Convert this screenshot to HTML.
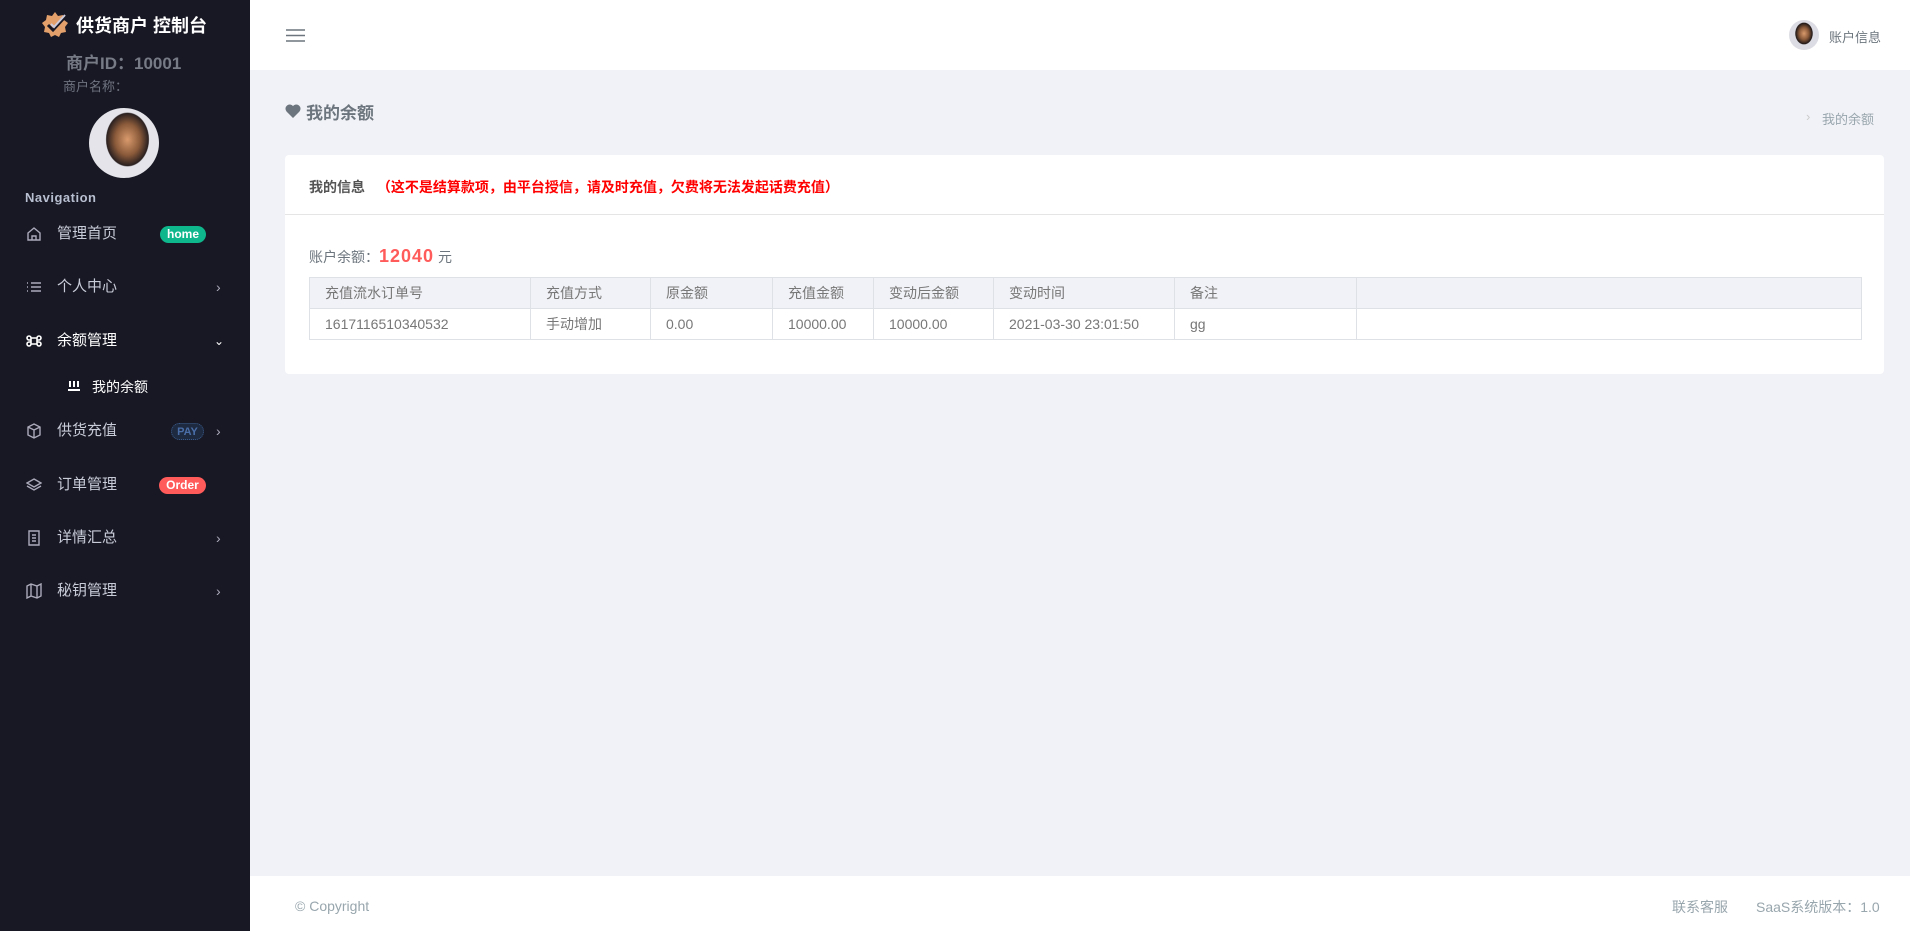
<!DOCTYPE html>
<html><head><meta charset="utf-8"><style>
*{margin:0;padding:0;box-sizing:border-box}
body{width:1910px;height:931px;overflow:hidden;background:#f1f2f7;font-family:"Liberation Sans","Noto Sans CJK SC",sans-serif;position:relative;color:#6c757d}
.side{position:absolute;left:0;top:0;width:250px;height:931px;background:#181824}
.abs{position:absolute}
.mi{position:absolute;left:0;width:250px;height:20px;color:#c8cbd8;font-size:15px;line-height:20px}
.mi .ic{position:absolute;left:26px;top:2px;width:16px;height:16px}
.mi .tx{position:absolute;left:57px;top:0}
.mi .chev{position:absolute;left:216px;top:0;font-size:14px;color:#aab}
.badge{position:absolute;height:17px;line-height:17px;border-radius:9px;font-size:12px;font-weight:bold;color:#fff;text-align:center;top:2px}
.top{position:absolute;left:250px;top:0;width:1660px;height:70px;background:#fff}
.card{position:absolute;left:285px;top:155px;width:1599px;height:219px;background:#fff;border-radius:4px}
table{position:absolute;left:24px;top:122px;width:1553px;border-collapse:collapse;font-size:14px;color:#777}
td{border:1px solid #dee2e6;height:31px;padding-left:15px;white-space:nowrap}
tr.h td{background:#f1f2f7;height:31px}
.foot{position:absolute;left:250px;top:876px;width:1660px;height:55px;background:#fff;font-size:14px;color:#98a6ad}
</style></head><body>
<div class="side">
 <svg class="abs" style="left:40px;top:10px" width="30" height="30" viewBox="0 0 30 30"><path d="M15 2l3 4 5-1 1 5 4 3-3 4 1 5-5 1-2 4-4-2-4 2-2-4-5-1 1-5-3-4 4-3 1-5 5 1z" fill="#e3a06b"/><path d="M8 15l5 5 12-13" stroke="#181824" stroke-width="3" fill="none"/><path d="M11 14l3 3 11-12" stroke="#ccd" stroke-width="2" fill="none"/></svg>
 <div class="abs" style="left:76px;top:12px;color:#fff;font-size:18px;font-weight:bold">供货商户 控制台</div>
 <div class="abs" style="left:66px;top:49px;color:#777b85;font-size:17px;font-weight:bold">商户ID：10001</div>
 <div class="abs" style="left:63px;top:76px;color:#6f7380;font-size:13px">商户名称：</div>
 <div class="abs" style="left:89px;top:108px;width:70px;height:70px;border-radius:50%;background:radial-gradient(ellipse 40% 50% at 55% 45%,#d99a6c 0,#8a5a3a 45%,#2a2020 75%,transparent 78%),#e4e4ea"></div>
 <div class="abs" style="left:25px;top:190px;color:#b8bfd0;font-size:13px;font-weight:bold;letter-spacing:.5px">Navigation</div>
 <div class="mi" style="top:224px"><svg class="ic" viewBox="0 0 16 16" fill="none" stroke="#aab" stroke-width="1.4"><path d="M2 7l6-5 6 5v7H2z M6 14v-4h4v4"/></svg><span class="tx">管理首页</span><span class="badge" style="left:160px;width:46px;background:#0fb78d">home</span></div>
 <div class="mi" style="top:277px"><svg class="ic" viewBox="0 0 16 16" stroke="#aab" stroke-width="1.4"><path d="M1 4h1M5 4h10M1 8h1M5 8h10M1 12h1M5 12h10"/></svg><span class="tx">个人中心</span><span class="chev">›</span></div>
 <div class="mi" style="top:331px;color:#fff"><svg class="ic" viewBox="0 0 16 16" fill="none" stroke="#fff" stroke-width="1.6"><path d="M5 5h6v6H5zM5 5a2 2 0 1 0-2 2h2M11 5a2 2 0 1 1 2 2h-2M5 11a2 2 0 1 1-2-2h2M11 11a2 2 0 1 0 2-2h-2"/></svg><span class="tx">余额管理</span><span class="chev" style="color:#fff;font-size:12px;left:214px">⌄</span></div>
 <div class="mi" style="top:377px;color:#fff;font-size:14px"><svg class="abs" style="left:68px;top:4px" width="12" height="11" viewBox="0 0 12 11" fill="#fff"><rect x="1" y="0" width="2" height="6"/><rect x="5" y="0" width="2" height="6"/><rect x="9" y="0" width="2" height="6"/><rect x="0" y="8" width="12" height="2"/></svg><span class="tx" style="left:92px">我的余额</span></div>
 <div class="mi" style="top:421px"><svg class="ic" viewBox="0 0 16 16" fill="none" stroke="#aab" stroke-width="1.4"><path d="M8 1l6 3v8l-6 3-6-3V4zM2 4l6 3 6-3M8 7v8"/></svg><span class="tx">供货充值</span><span class="badge" style="left:171px;width:33px;color:#4a6ea8;border:1px dotted #3a5a8a;background:#1e2a40;font-size:11px">PAY</span><span class="chev">›</span></div>
 <div class="mi" style="top:475px"><svg class="ic" viewBox="0 0 16 16" fill="none" stroke="#aab" stroke-width="1.4"><path d="M8 2l7 4-7 4-7-4zM1 9l7 4 7-4"/></svg><span class="tx">订单管理</span><span class="badge" style="left:159px;width:47px;background:#ff5b5b">Order</span></div>
 <div class="mi" style="top:528px"><svg class="ic" viewBox="0 0 16 16" fill="none" stroke="#aab" stroke-width="1.4"><path d="M3 1h10v14H3zM6 5h4M6 8h4M6 11h4"/></svg><span class="tx">详情汇总</span><span class="chev">›</span></div>
 <div class="mi" style="top:581px"><svg class="ic" viewBox="0 0 16 16" fill="none" stroke="#aab" stroke-width="1.4"><path d="M1 3l4-2 6 2 4-2v12l-4 2-6-2-4 2zM5 1v12M11 3v12"/></svg><span class="tx">秘钥管理</span><span class="chev">›</span></div>
</div>
<div class="top">
 <svg class="abs" style="left:36px;top:29px" width="19" height="13" viewBox="0 0 19 13" stroke="#6c757d" stroke-width="1.6"><path d="M0 1h19M0 6.5h19M0 12h19"/></svg>
 <div class="abs" style="left:1539px;top:20px;width:30px;height:30px;border-radius:50%;background:radial-gradient(ellipse 40% 50% at 50% 45%,#d99a6c 0,#8a5a3a 40%,#201818 70%,transparent 75%),#dcdce4"></div>
 <div class="abs" style="left:1579px;top:27px;font-size:13px;color:#6c757d">账户信息</div>
</div>
<svg class="abs" style="left:285px;top:103px" width="16" height="15" viewBox="0 0 16 15"><path d="M8 15L1.5 8.5A4 4 0 0 1 8 3a4 4 0 0 1 6.5 5.5z" fill="#6c757d"/></svg>
<div class="abs" style="left:306px;top:99px;font-size:17px;font-weight:bold;color:#6c757d">我的余额</div>
<div class="abs" style="left:1806px;top:109px;font-size:13px;color:#ccc">›</div>
<div class="abs" style="left:1822px;top:109px;font-size:13px;color:#98a6ad">我的余额</div>
<div class="card">
 <div class="abs" style="left:24px;top:22px;font-size:14px;font-weight:bold;color:#555"> 我的信息 <span style="color:#f00;margin-left:8px">（这不是结算款项，由平台授信，请及时充值，欠费将无法发起话费充值）</span></div>
 <div class="abs" style="left:0;top:59px;width:1599px;border-top:1px solid #e5e5e5"></div>
 <div class="abs" style="left:24px;top:91px;font-size:14px;color:#6c757d">账户余额：<b style="color:#ff5b5b;font-size:18px;letter-spacing:1px">12040</b> 元</div>
 <table>
  <tr class="h"><td style="width:221px">充值流水订单号</td><td style="width:120px">充值方式</td><td style="width:122px">原金额</td><td style="width:101px">充值金额</td><td style="width:120px">变动后金额</td><td style="width:181px">变动时间</td><td style="width:182px">备注</td><td></td></tr>
  <tr><td>1617116510340532</td><td>手动增加</td><td>0.00</td><td>10000.00</td><td>10000.00</td><td>2021-03-30 23:01:50</td><td>gg</td><td></td></tr>
 </table>
</div>
<div class="foot">
 <div class="abs" style="left:45px;top:22px">© Copyright</div>
 <div class="abs" style="left:1422px;top:21px">联系客服</div>
 <div class="abs" style="left:1506px;top:21px">SaaS系统版本：1.0</div>
</div>
</body></html>
